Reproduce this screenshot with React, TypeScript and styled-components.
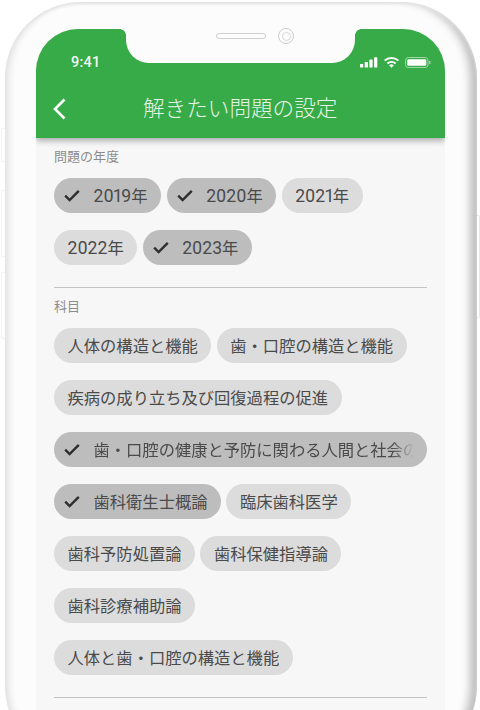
import { FC, ReactNode } from 'react';
import styled, { createGlobalStyle } from 'styled-components';

const GlobalStyle = createGlobalStyle`
	html, body {
		margin: 0;
		padding: 0;
		background: #fff;
		font-family: Roboto, "Noto Sans CJK JP", sans-serif;
	}
`;

const Page = styled.div`
	width: 480px;
	height: 710px;
	overflow: hidden;
	position: relative;
`;

const SideButton = styled.div<{ $side: 'left' | 'right'; $top: number; $height: number }>`
	position: absolute;
	${(p) => p.$side}: ${(p) => (p.$side === 'left' ? 1 : 0)}px;
	top: ${(p) => p.$top}px;
	width: 5px;
	height: ${(p) => p.$height}px;
	box-sizing: border-box;
	background: #fefefe;
	border: 1px solid ${(p) => (p.$side === 'left' ? '#f2f2f2' : '#e8e8e8')};
	border-${(p) => (p.$side === 'left' ? 'right' : 'left')}: none;
	border-radius: ${(p) => (p.$side === 'left' ? '2px 0 0 2px' : '0 2px 2px 0')};
`;

const Frame = styled.div`
	position: relative;
	width: 472px;
	height: 760px;
	margin: 2px 0 0 5px;
	padding: 27px 32px 0 31px;
	box-sizing: border-box;
	background: #fcfcfc;
	border-radius: 76px;
	box-shadow:
		inset 0 2px 3px #e4e4e4,
		inset 8px 0 7px -4px #e2e2e2,
		inset -11px 0 8px -4px #bcbcbc;
`;

const Notch = styled.div`
	position: absolute;
	top: 27px;
	left: 121px;
	width: 229px;
	height: 34px;
	padding-left: 29px;
	box-sizing: border-box;
	background: #fcfcfc;
	border-radius: 0 0 23px 23px;
	display: flex;
	align-items: flex-start;
	justify-content: center;
	gap: 12px;
	&::before,
	&::after {
		content: '';
		position: absolute;
		top: 0;
		width: 6px;
		height: 6px;
	}
	&::before {
		left: -6px;
		background: radial-gradient(circle at 0 100%, transparent 5.5px, #fcfcfc 6px);
	}
	&::after {
		right: -6px;
		background: radial-gradient(circle at 100% 100%, transparent 5.5px, #fcfcfc 6px);
	}
`;

const Speaker = styled.div`
	width: 50px;
	height: 6px;
	margin-top: 4px;
	border-radius: 3px;
	border: 1px solid #cfcfcf;
	background: #fdfdfd;
	box-sizing: border-box;
`;

const Camera = styled.div`
	width: 16px;
	height: 16px;
	margin-top: -1px;
	border-radius: 50%;
	border: 1px solid #cdcdcd;
	box-sizing: border-box;
	display: flex;
	align-items: center;
	justify-content: center;
	&::after {
		content: '';
		width: 9px;
		height: 9px;
		border-radius: 50%;
		border: 1px solid #d8d8d8;
		box-sizing: border-box;
	}
`;

const Screen = styled.div`
	height: 733px;
	background: #f7f7f7;
	border-radius: 42px 42px 0 0;
	overflow: hidden;
`;

const Header = styled.header`
	height: 109px;
	background: #37ab47;
	box-shadow: 0 3px 6px rgba(0, 0, 0, 0.3);
	position: relative;
	color: #fff;
	display: flex;
	flex-direction: column;
`;

const StatusBar = styled.div`
	display: flex;
	align-items: center;
	justify-content: space-between;
	padding: 23px 14px 0 35px;
	height: 20px;
`;

const Time = styled.span`
	font-size: 14.5px;
	font-weight: 500;
	letter-spacing: 0.2px;
	color: #f2f8f2;
`;

const TitleBar = styled.div`
	display: flex;
	align-items: center;
	padding: 21px 0 0 16px;
`;

const BackIcon = styled.svg`
	width: 15px;
	height: 24px;
	flex: none;
`;

const Title = styled.h1`
	margin: 0 0 0 76px;
	font-size: 21.6px;
	font-weight: 300;
	line-height: 32px;
	color: #e6f3e7;
	white-space: nowrap;
`;

const Body = styled.div`
	padding: 10px 18px 0;
`;

const Section = styled.section`
	padding-bottom: 14px;
	border-bottom: 1.5px solid #c4c4c4;
	& + & {
		margin-top: 10px;
	}
`;

const SectionLabel = styled.div`
	font-size: 13px;
	line-height: 18px;
	color: #8c8c8c;
	margin-bottom: 3px;
`;

const ChipRows = styled.div`
	display: flex;
	flex-wrap: wrap;
	column-gap: 5.5px;
`;

const Chip = styled.div<{ $selected?: boolean }>`
	height: 35px;
	margin: 8.5px 0;
	max-width: 100%;
	box-sizing: border-box;
	padding: 0 13.5px 0 ${(p) => (p.$selected ? 10 : 13.5)}px;
	display: flex;
	align-items: center;
	border-radius: 17.5px;
	background: ${(p) => (p.$selected ? '#bdbdbd' : '#dcdcdc')};
	color: #4a4a4a;
	font-size: 16.3px;
	white-space: nowrap;
	overflow: hidden;
`;

const CheckIcon = styled.svg`
	width: 16px;
	height: 13px;
	flex: none;
	margin-right: 13.5px;
`;

const ChipText = styled.span<{ $fade?: boolean }>`
	overflow: hidden;
	${(p) =>
		p.$fade &&
		`mask-image: linear-gradient(to right, #000 calc(100% - 22px), transparent 100%);`}
`;

const YearDigits = styled.span`
	font-size: 17.6px;
	font-variant-numeric: proportional-nums;
`;

const StatusIcons: FC = () => (
	<svg width="71" height="11" viewBox="0 0 71 11">
		<rect x="0" y="7" width="3.2" height="3.6" rx="0.7" fill="#fff" />
		<rect x="4.7" y="5" width="3.2" height="5.6" rx="0.7" fill="#fff" />
		<rect x="9.4" y="2.6" width="3.2" height="8" rx="0.7" fill="#fff" />
		<rect x="14.1" y="0.2" width="3.2" height="10.4" rx="0.7" fill="#fff" />
		<path d="M24.6 3.6 A10.5 10.5 0 0 1 38.4 3.6" fill="none" stroke="#fff" strokeWidth="1.9" />
		<path d="M27.4 6.4 A6.4 6.4 0 0 1 35.6 6.4" fill="none" stroke="#fff" strokeWidth="1.9" />
		<path d="M31.5 10.8 L29.2 8.4 A3.3 3.3 0 0 1 33.8 8.4 Z" fill="#fff" />
		<rect x="45.5" y="0.5" width="22.5" height="10" rx="2.8" fill="none" stroke="#9fd6a7" />
		<rect x="47.2" y="2.2" width="19.1" height="6.6" rx="1.4" fill="#fff" />
		<rect x="69.2" y="3.8" width="1.4" height="3.4" rx="0.7" fill="#9fd6a7" />
	</svg>
);

const years = [
	{ year: '2019', selected: true },
	{ year: '2020', selected: true },
	{ year: '2021' },
	{ year: '2022' },
	{ year: '2023', selected: true },
];

const subjects = [
	{ label: '人体の構造と機能' },
	{ label: '歯・口腔の構造と機能' },
	{ label: '疾病の成り立ち及び回復過程の促進' },
	{ label: '歯・口腔の健康と予防に関わる人間と社会の仕組み', selected: true, fade: true },
	{ label: '歯科衛生士概論', selected: true },
	{ label: '臨床歯科医学' },
	{ label: '歯科予防処置論' },
	{ label: '歯科保健指導論' },
	{ label: '歯科診療補助論' },
	{ label: '人体と歯・口腔の構造と機能' },
];

interface IFilterChipProps {
	children: ReactNode;
	selected?: boolean;
	fade?: boolean;
}

const FilterChip: FC<IFilterChipProps> = ({ children, selected, fade }) => (
	<Chip $selected={selected}>
		{selected && (
			<CheckIcon viewBox="0 0 16 13">
				<path d="M1.2 6.6 L5.6 11 L14.8 1.8" fill="none" stroke="#2e2e2e" strokeWidth="2.4" />
			</CheckIcon>
		)}
		<ChipText $fade={fade}>{children}</ChipText>
	</Chip>
);

export default function App() {
	return (
		<Page>
			<GlobalStyle />
			<SideButton $side="left" $top={128} $height={34} />
			<SideButton $side="left" $top={190} $height={67} />
			<SideButton $side="left" $top={272} $height={67} />
			<SideButton $side="right" $top={215} $height={103} />
			<Frame>
				<Screen>
					<Header>
						<StatusBar>
							<Time>9:41</Time>
							<StatusIcons />
						</StatusBar>
						<TitleBar>
							<BackIcon viewBox="0 0 15 24">
								<path d="M12.5 2.5 L3 12 L12.5 21.5" fill="none" stroke="#fff" strokeWidth="2.6" />
							</BackIcon>
							<Title>解きたい問題の設定</Title>
						</TitleBar>
					</Header>
					<Body>
						<Section>
							<SectionLabel>問題の年度</SectionLabel>
							<ChipRows>
								{years.map((y) => (
									<FilterChip key={y.year} selected={y.selected}>
										<YearDigits>{y.year}</YearDigits>年
									</FilterChip>
								))}
							</ChipRows>
						</Section>
						<Section>
							<SectionLabel>科目</SectionLabel>
							<ChipRows>
								{subjects.map((s) => (
									<FilterChip key={s.label} selected={s.selected} fade={s.fade}>
										{s.label}
									</FilterChip>
								))}
							</ChipRows>
						</Section>
					</Body>
				</Screen>
				<Notch>
					<Speaker />
					<Camera />
				</Notch>
			</Frame>
		</Page>
	);
}
